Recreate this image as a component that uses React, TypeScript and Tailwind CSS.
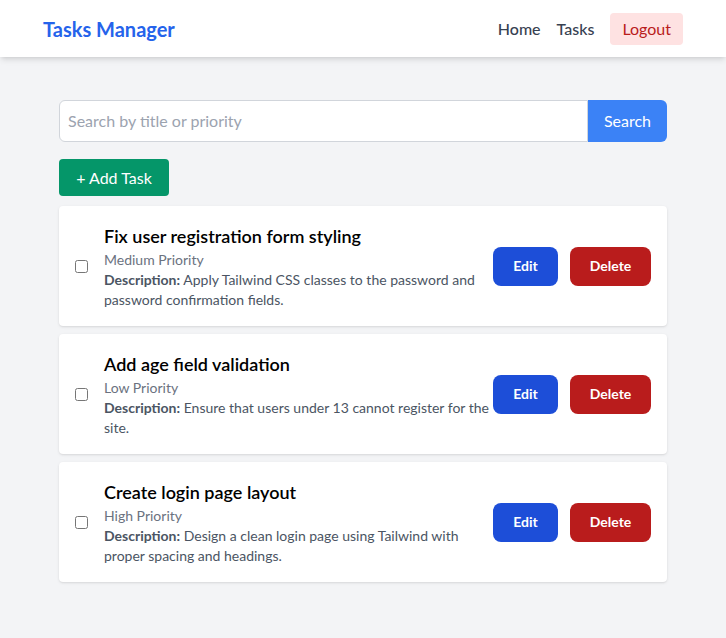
const font = { fontFamily: "Lato, 'Noto Sans', 'Liberation Sans', sans-serif" } as const;

const tasks = [
  {
    title: "Fix user registration form styling",
    priority: "Medium Priority",
    description: "Apply Tailwind CSS classes to the password and password confirmation fields.",
  },
  {
    title: "Add age field validation",
    priority: "Low Priority",
    description: "Ensure that users under 13 cannot register for the site.",
  },
  {
    title: "Create login page layout",
    priority: "High Priority",
    description: "Design a clean login page using Tailwind with proper spacing and headings.",
  },
];

export default function App() {
  return (
    <div style={font} className="min-h-[638px] bg-[#f3f4f6]">
      <header className="h-[57px] bg-white shadow-md flex items-center justify-between px-[43px]">
        <h1 className="text-xl font-bold text-[#2563eb]">Tasks Manager</h1>
        <nav className="flex items-center gap-4 text-base">
          <a className="font-medium text-[#374151]">Home</a>
          <a className="font-medium text-[#374151]">Tasks</a>
          <button className="h-8 px-3 rounded bg-[#fee2e2] text-[#b91c1c]">Logout</button>
        </nav>
      </header>

      <main className="px-[59px] pt-[43px]">
        <div className="flex h-[42px]">
          <input
            type="text"
            placeholder="Search by title or priority"
            className="flex-1 border border-[#d1d5db] rounded-l-md bg-white px-2 text-base text-[#111827] placeholder:text-[#9ca3af] outline-none"
          />
          <button className="px-4 bg-[#3b82f6] text-white rounded-r-md">Search</button>
        </div>

        <button className="mt-[17px] h-[37px] w-[110px] rounded bg-[#059669] text-white flex items-center justify-center">
          + Add Task
        </button>

        <ul className="mt-[10px] flex flex-col gap-2">
          {tasks.map((t) => (
            <li key={t.title} className="bg-white rounded shadow-sm p-4 flex items-center">
              <input type="checkbox" className="w-[13px] h-[13px] mr-4 shrink-0" />
              <div className="flex-1">
                <h2 className="text-lg font-semibold text-black">{t.title}</h2>
                <p className="text-sm text-[#6b7280]">{t.priority}</p>
                <p className="text-sm text-[#4b5563]">
                  <span className="font-bold">Description:</span> {t.description}
                </p>
              </div>
              <div className="flex gap-3 shrink-0">
                <button className="h-[39px] w-[65px] rounded-lg bg-[#1d4ed8] text-white text-sm font-bold">Edit</button>
                <button className="h-[39px] w-[81px] rounded-lg bg-[#b91c1c] text-white text-sm font-bold">Delete</button>
              </div>
            </li>
          ))}
        </ul>
      </main>
    </div>
  );
}
